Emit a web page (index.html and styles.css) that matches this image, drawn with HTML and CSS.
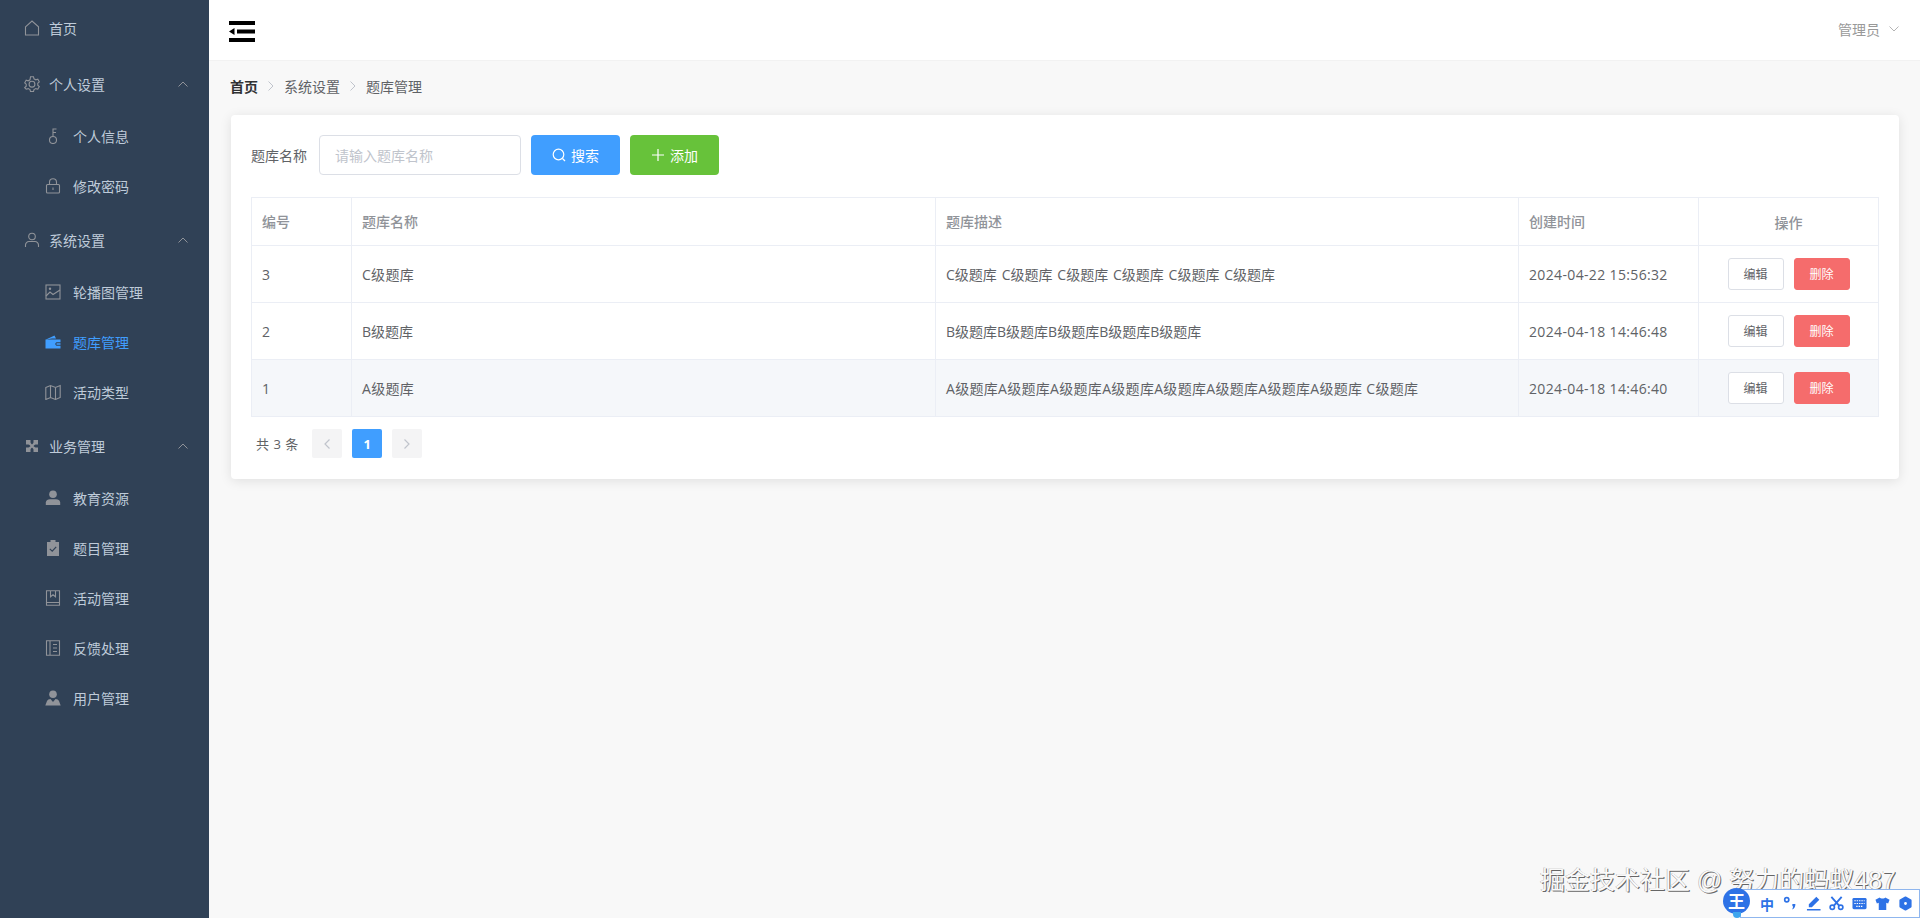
FILE: index.html
```html
<!DOCTYPE html>
<html lang="zh-CN">
<head>
<meta charset="utf-8">
<title>题库管理</title>
<link rel="stylesheet" href="styles.css">
</head>
<body>
<div class="app">
  <aside class="sidebar">
    <div class="menu-item top">
      <svg class="ico" viewBox="0 0 16 16"><path class="s" d="M1.500 6.800 8 1l6.500 5.800V15h-13z"/></svg><span>首页</span>
    </div>
    <div class="menu-item top">
      <svg class="ico" viewBox="0 0 16 16"><path class="s" d="M6.500.8h3l.5 2 1.800 1 2-.6 1.500 2.600-1.500 1.400v2l1.500 1.400-1.500 2.600-2-.6-1.800 1-.5 2h-3l-.5-2-1.800-1-2 .6L.7 11.600l1.500-1.400v-2L.7 6.800l1.500-2.600 2 .6 1.800-1z"/><circle class="s" cx="8" cy="8.200" r="2.900"/></svg><span>个人设置</span>
      <svg class="chev" viewBox="0 0 10 6"><path d="M.5 5.500 5 1l4.500 4.500"/></svg>
    </div>
    <div class="menu-item sub">
      <svg class="ico" viewBox="0 0 16 16"><circle class="s" cx="8" cy="12" r="3.500"/><path class="s" d="M8 8.500V1h3.500M8 4.500h3"/></svg><span>个人信息</span>
    </div>
    <div class="menu-item sub">
      <svg class="ico" viewBox="0 0 16 16"><rect class="s" x="1.500" y="6.500" width="13" height="8.500" rx="1"/><path class="s" d="M4.500 6.500V4.200a3.500 3.500 0 0 1 7 0v2.300M8 9.500v2.500"/></svg><span>修改密码</span>
    </div>
    <div class="menu-item top">
      <svg class="ico" viewBox="0 0 16 16"><circle class="s" cx="8" cy="4.500" r="3.300"/><path class="s" d="M1.500 15v-2a3.500 3.500 0 0 1 3.500-3.500h6a3.500 3.500 0 0 1 3.500 3.500v2"/></svg><span>系统设置</span>
      <svg class="chev" viewBox="0 0 10 6"><path d="M.5 5.500 5 1l4.500 4.500"/></svg>
    </div>
    <div class="menu-item sub">
      <svg class="ico" viewBox="0 0 16 16"><rect class="s" x="1" y="1" width="14" height="14"/><path class="s" d="m1 12 4-4 3 2.500L15 6"/><circle class="f" cx="5" cy="4.800" r="1.200"/></svg><span>轮播图管理</span>
    </div>
    <div class="menu-item sub active">
      <svg class="ico" viewBox="0 0 16 16"><path class="fa" d="M1 5.500 9.500 1.500l1.500 3h-4zM.5 5.500h15v2.800h-4a1.800 1.800 0 0 0 0 3.400h4v2.800H.5zM11.500 9.200h4v1.500h-4z"/></svg><span>题库管理</span>
    </div>
    <div class="menu-item sub">
      <svg class="ico" viewBox="0 0 16 16"><path class="s" d="M.8 3.500 5.500 1.500l5 2 4.700-2v12l-4.700 2-5-2-4.700 2zM5.500 1.500v12M10.500 3.500v12"/></svg><span>活动类型</span>
    </div>
    <div class="menu-item top">
      <svg class="ico" viewBox="0 0 16 16"><path class="f" d="M2 2h4.500v4.500H2zM9.500 2H14v4.500H9.500zM2 9.500h4.500V14H2zM9.500 9.500H14V14H9.500z"/><path class="x" d="m3 3 10 10M13 3 3 13"/></svg><span>业务管理</span>
      <svg class="chev" viewBox="0 0 10 6"><path d="M.5 5.500 5 1l4.500 4.500"/></svg>
    </div>
    <div class="menu-item sub">
      <svg class="ico" viewBox="0 0 16 16"><circle class="f" cx="8" cy="4.300" r="3.800"/><path class="f" d="M.8 15v-2.500C.8 10.500 3 9.300 5 9.300h6c2 0 4.200 1.200 4.200 3.200V15z"/></svg><span>教育资源</span>
    </div>
    <div class="menu-item sub">
      <svg class="ico" viewBox="0 0 16 16"><path class="f" d="M5.500 0h5v2H14v14H2V2h3.500z"/><path class="ln" d="m4.800 8.800 2.400 2.400 4-4.400"/></svg><span>题目管理</span>
    </div>
    <div class="menu-item sub">
      <svg class="ico" viewBox="0 0 16 16"><path class="s" d="M1.500.8h13v14.400h-13zM1.500 12.500h13M5.500.8v6l2.500-2 2.500 2v-6"/></svg><span>活动管理</span>
    </div>
    <div class="menu-item sub">
      <svg class="ico" viewBox="0 0 16 16"><path class="s" d="M1.500.8h13v14.400h-13zM5 .8v14.400M8 4.500h4M8 8h4M8 11.500h4"/></svg><span>反馈处理</span>
    </div>
    <div class="menu-item sub">
      <svg class="ico" viewBox="0 0 16 16"><circle class="f" cx="8" cy="4.300" r="3.800"/><path class="f" d="M.3 15.500 2 11c.5-1.300 2-2 3.500-2L8 12l2.500-3c1.500 0 3 .7 3.500 2l1.700 4.500z"/></svg><span>用户管理</span>
    </div>
  </aside>
  <main class="main">
    <header class="topbar">
      <svg class="burger" viewBox="0 0 26 21"><path d="M0 0h26v4H0zM8 8.500h18v4H8zM0 17h26v4H0zM0 10.500 5.500 7v7z"/></svg>
      <div class="user"><span>管理员</span><svg class="chev-down" viewBox="0 0 10 6"><path d="M.5.500 5 5l4.500-4.500"/></svg></div>
    </header>
    <div class="content">
      <nav class="crumbs">
        <b>首页</b>
        <svg class="crumb-sep" viewBox="0 0 6 10"><path d="M.5.500 5 5 .5 9.500"/></svg>
        <span>系统设置</span>
        <svg class="crumb-sep" viewBox="0 0 6 10"><path d="M.5.500 5 5 .5 9.500"/></svg>
        <span>题库管理</span>
      </nav>
      <section class="card">
        <div class="filter">
          <label class="filter-label" for="q">题库名称</label>
          <input id="q" class="input" placeholder="请输入题库名称">
          <button class="btn primary"><svg class="btn-ico" viewBox="0 0 14 14"><circle cx="6.500" cy="6.500" r="5.300"/><path d="m10.500 10.500 2.500 2.500"/></svg>搜索</button>
          <button class="btn success"><svg class="btn-ico" viewBox="0 0 14 14"><path d="M7 1v12M1 7h12"/></svg>添加</button>
        </div>
        <table class="grid">
          <colgroup><col class="c1"><col class="c2"><col class="c3"><col class="c4"><col class="c5"></colgroup>
          <thead>
            <tr><th>编号</th><th>题库名称</th><th>题库描述</th><th>创建时间</th><th class="center">操作</th></tr>
          </thead>
          <tbody>
            <tr>
              <td>3</td><td class="lt">C级题库</td><td class="ws">C级题库 C级题库 C级题库 C级题库 C级题库 C级题库</td><td class="date">2024-04-22 15:56:32</td>
              <td class="center"><div class="ops"><button class="mini">编辑</button><button class="mini danger">删除</button></div></td>
            </tr>
            <tr>
              <td>2</td><td>B级题库</td><td>B级题库B级题库B级题库B级题库B级题库</td><td class="date">2024-04-18 14:46:48</td>
              <td class="center"><div class="ops"><button class="mini">编辑</button><button class="mini danger">删除</button></div></td>
            </tr>
            <tr class="hover">
              <td>1</td><td class="lt">A级题库</td><td class="lt">A级题库A级题库A级题库A级题库A级题库A级题库A级题库A级题库 C级题库</td><td class="date">2024-04-18 14:46:40</td>
              <td class="center"><div class="ops"><button class="mini">编辑</button><button class="mini danger">删除</button></div></td>
            </tr>
          </tbody>
        </table>
        <div class="pager">
          <span class="total">共 3 条</span>
          <button class="page"><svg class="page-ico" viewBox="0 0 6 10"><path d="M5.500.500 1 5l4.500 4.500"/></svg></button>
          <button class="page on">1</button>
          <button class="page"><svg class="page-ico" viewBox="0 0 6 10"><path d="M.5.500 5 5 .5 9.500"/></svg></button>
        </div>
      </section>
    </div>
  </main>
</div>
<div class="watermark">掘金技术社区 @ 努力的蚂蚁487</div>
<div class="ime">
  <div class="ime-logo">王</div>
  <div class="ime-bar">
    <span class="ime-zh">中</span>
    <svg class="ime-ico" viewBox="0 0 16 16"><circle class="ime-s" cx="4" cy="4" r="2.200"/><path class="ime-f" d="M10 8.500h3.200c0 3-1 5-3.500 6 .8-1.500 1-2.700 1-3.500H10z"/></svg>
    <svg class="ime-ico" viewBox="0 0 16 16"><path class="ime-f" d="M11 .8 14.200 4l-8 8H3v-3.200zM1 13.800h14.500v1.700H1z"/></svg>
    <svg class="ime-ico" viewBox="0 0 16 16"><circle class="ime-s" cx="3.500" cy="12" r="2.300"/><circle class="ime-s" cx="12.500" cy="12" r="2.300"/><path class="ime-l" d="M5 10.500 13.500 1M11 10.500 2.500 1"/></svg>
    <svg class="ime-ico" viewBox="0 0 16 16"><rect class="ime-f" x=".5" y="2" width="15" height="12" rx="1.500"/><path class="ime-k" d="M2.500 5h11M2.500 8h11M4.500 11h7"/></svg>
    <svg class="ime-ico" viewBox="0 0 16 16"><path class="ime-f" d="M5 1.500C6 3 10 3 11 1.500l4.500 2.500-1.500 4-2-.8V15H4V7.200L2 8 .5 4z"/></svg>
    <svg class="ime-ico" viewBox="0 0 16 16"><path class="ime-gear" fill-rule="evenodd" d="M8 1.500l5.500 3.200v6.600L8 14.500l-5.500-3.200V4.700zM8 5.500a2.500 2.500 0 1 0 0 5 2.500 2.500 0 0 0 0-5z"/></svg>
  </div>
</div>
</body>
</html>
```
FILE: styles.css
```css
* { box-sizing: border-box; }
html, body { margin: 0; height: 100%; overflow: hidden; }
body {
  font-family: "Open Sans", "Noto Sans CJK SC", sans-serif;
  font-size: 14px;
  color: #606266;
  background: #f8f8f8;
}
.app { display: flex; height: 918px; }

/* sidebar */
.sidebar { width: 209px; flex: none; background: #304156; }
.menu-item { display: flex; align-items: center; color: #bfcbd9; }
.menu-item.top { height: 56px; padding: 0 21px 0 24px; }
.menu-item.sub { height: 50px; padding: 0 21px 2px 45px; }
.menu-item .ico { width: 16px; height: 16px; flex: none; }
.menu-item.top .ico { margin-right: 9px; }
.menu-item.sub .ico { margin-right: 12px; }
.menu-item.active { color: #409eff; }
.s { fill: none; stroke: #909399; stroke-width: 1.100; }
.f { fill: #909399; }
.fa { fill: #409eff; }
.x { fill: none; stroke: #909399; stroke-width: 2.200; }
.ln { fill: none; stroke: #304156; stroke-width: 1.200; }
.chev { width: 10px; height: 6px; margin-left: auto; fill: none; stroke: #909399; stroke-width: 1; }

/* main */
.main { flex: 1; min-width: 0; display: flex; flex-direction: column; }
.topbar {
  height: 61px; flex: none; background: #fff;
  display: flex; align-items: center; justify-content: space-between;
  padding: 0 21px 0 20px;
  border-bottom: 1px solid #f2f2f2;
}
.burger { width: 26px; height: 21px; fill: #000; margin-top: 3px; }
.user { display: flex; align-items: center; color: #999; gap: 9px; margin-top: -3px; }
.chev-down { width: 10px; height: 6px; fill: none; stroke: #b4b4b4; stroke-width: 1; }

.content { flex: 1; padding: 0 21px; }
.crumbs { height: 54px; display: flex; align-items: center; color: #606266; padding-bottom: 5px; }
.crumbs b { color: #303133; font-weight: 700; }
.crumb-sep { width: 6px; height: 10px; margin: 0 10px; fill: none; stroke: #c0c4cc; stroke-width: 1; }

.card {
  background: #fff; border-radius: 4px;
  box-shadow: 0 2px 12px rgba(0, 0, 0, .1);
  padding: 20px;
  margin-left: 1px;
  height: 364px;
}
.filter { display: flex; align-items: center; height: 40px; margin-bottom: 22px; }
.filter-label { width: 68px; flex: none; }
.input {
  width: 202px; height: 40px; border: 1px solid #dcdfe6; border-radius: 4px;
  padding: 0 15px; font: inherit; color: #606266; outline: none; margin-right: 10px;
}
.input::placeholder { color: #c0c4cc; opacity: 1; }
.btn {
  width: 89px; height: 40px; border: 0; border-radius: 4px; color: #fff;
  font: inherit; display: flex; align-items: center; justify-content: center; gap: 5px;
  margin-right: 10px; padding: 0 0 1px;
}
.primary { background: #409eff; }
.success { background: #67c23a; }
.btn-ico { width: 14px; height: 14px; fill: none; stroke: #fff; stroke-width: 1.200; }

.grid { width: 1627px; border-collapse: collapse; table-layout: fixed; }
.c1 { width: 100px; } .c2 { width: 584px; } .c3 { width: 583px; } .c4 { width: 180px; } .c5 { width: 180px; }
.grid th, .grid td { border: 1px solid #ebeef5; padding: 0 10px; text-align: left; font-weight: 400; }
.grid th { height: 48px; color: #909399; font-weight: 500; padding-bottom: 2px; }
.grid td { height: 57px; color: #606266; }
.grid .center { text-align: center; padding: 0; }
.grid td.date { letter-spacing: .35px; }
.grid td.lt { letter-spacing: .3px; }
.grid td.ws { word-spacing: 1.200px; }
.hover td { background: #f5f7fa; }
.ops { display: flex; justify-content: center; gap: 10px; }
.mini {
  width: 56px; height: 32px; border: 1px solid #dcdfe6; border-radius: 3px;
  background: #fff; color: #606266; font: inherit; font-size: 12px; padding: 0;
}
.mini.danger { background: #f56c6c; border-color: #f56c6c; color: #fff; }

.pager { display: flex; align-items: center; margin-top: 12px; height: 29px; }
.total { margin: 0 14px 0 5px; font-size: 13px; word-spacing: 1px; }
.page {
  width: 30px; height: 29px; border: 0; border-radius: 2px; background: #f4f4f5;
  margin-right: 10px; padding: 0; display: flex; align-items: center; justify-content: center;
  font: inherit; font-size: 13px; font-weight: 700; color: #606266;
}
.page.on { background: #409eff; color: #fff; }
.page-ico { width: 6px; height: 10px; fill: none; stroke: #c0c4cc; stroke-width: 1.200; }

/* overlays */
.watermark {
  position: absolute; right: 24px; bottom: 24px;
  font-size: 25px; line-height: 28px; color: #fafafa; white-space: nowrap;
  font-family: "Liberation Sans", "Noto Sans CJK SC", sans-serif;
  text-shadow: 1px 1px 0 #666, -.5px -.5px 0 #aaa;
}
.ime { position: absolute; right: 0; bottom: 0; width: 197px; height: 30px; }
.ime-logo {
  position: absolute; left: 0; top: 0; width: 27px; height: 26px; border-radius: 50%;
  background: #2e72e6; color: #fff; text-align: center; font-size: 17px; line-height: 26px; font-weight: 700;
  font-family: "Noto Sans CJK SC", sans-serif; z-index: 1;
}
.ime-logo::after {
  content: ""; position: absolute; left: 10px; bottom: -4px; width: 8px; height: 6px;
  background: #3ea6ee; border-radius: 0 0 6px 6px; z-index: -1;
}
.ime-bar {
  position: absolute; left: 17px; top: 1px; right: 0; bottom: 0;
  background: #fff; border: 1px solid #8fb6ee;
  display: flex; align-items: center; justify-content: flex-end; gap: 8px; padding-right: 6px;
}
.ime-zh { color: #2e72e6; font-size: 14px; font-weight: 700; font-family: "Noto Sans CJK SC", sans-serif; line-height: 16px; width: 15px; }
.ime-ico { width: 15px; height: 15px; }
.ime-f { fill: #2e72e6; }
.ime-s { fill: none; stroke: #2e72e6; stroke-width: 1.800; }
.ime-l { fill: none; stroke: #2e72e6; stroke-width: 2; }
.ime-k { fill: none; stroke: #fff; stroke-width: 1.200; stroke-dasharray: 1.500 1; }
.ime-gear { fill: #2e72e6; stroke: #2e72e6; stroke-width: 2; stroke-linejoin: round; }
```
